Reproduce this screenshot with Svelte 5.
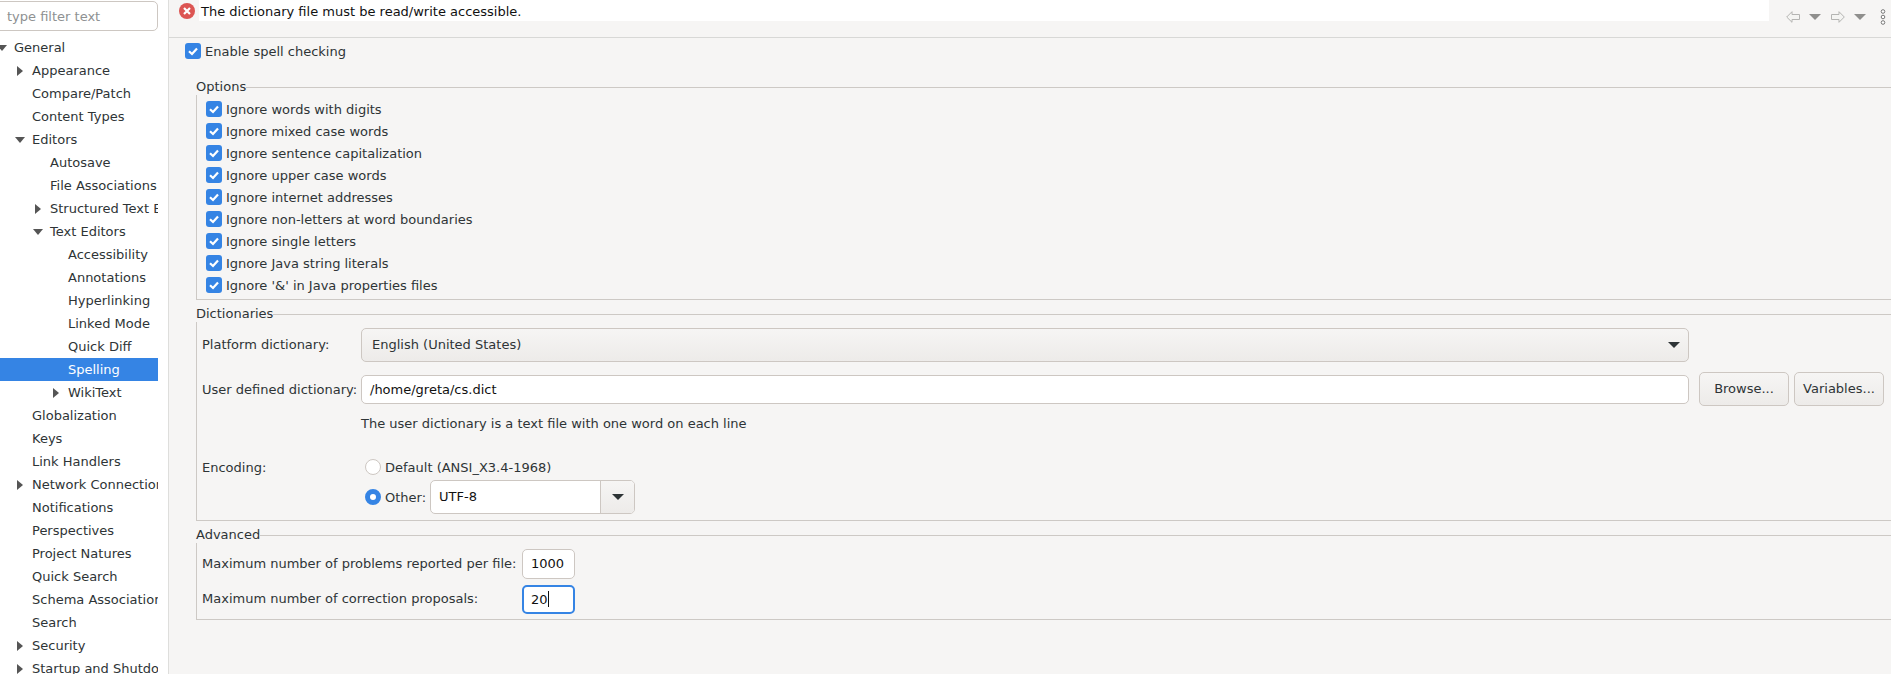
<script>
  const tree = [
    ["General", 0, "open"],
    ["Appearance", 1, "closed"],
    ["Compare/Patch", 1],
    ["Content Types", 1],
    ["Editors", 1, "open"],
    ["Autosave", 2],
    ["File Associations", 2],
    ["Structured Text Editors", 2, "closed"],
    ["Text Editors", 2, "open"],
    ["Accessibility", 3],
    ["Annotations", 3],
    ["Hyperlinking", 3],
    ["Linked Mode", 3],
    ["Quick Diff", 3],
    ["Spelling", 3, null, true],
    ["WikiText", 3, "closed"],
    ["Globalization", 1],
    ["Keys", 1],
    ["Link Handlers", 1],
    ["Network Connections", 1, "closed"],
    ["Notifications", 1],
    ["Perspectives", 1],
    ["Project Natures", 1],
    ["Quick Search", 1],
    ["Schema Associations", 1],
    ["Search", 1],
    ["Security", 1, "closed"],
    ["Startup and Shutdown", 1, "closed"]
  ];

  const options = [
    "Ignore words with digits",
    "Ignore mixed case words",
    "Ignore sentence capitalization",
    "Ignore upper case words",
    "Ignore internet addresses",
    "Ignore non-letters at word boundaries",
    "Ignore single letters",
    "Ignore Java string literals",
    "Ignore '&' in Java properties files"
  ];
</script>

{#snippet checkbox(text)}
  <div class="check">
    <span class="box">
      <svg width="16" height="16" viewBox="0 0 16 16">
        <path d="M4 8.2 L7 11 L12 5.4" fill="none" stroke="#fff" stroke-width="2.2" />
      </svg>
    </span>
    <span>{text}</span>
  </div>
{/snippet}

{#snippet dropArrow()}
  <svg class="drop" width="12" height="6" viewBox="0 0 12 6"><path d="M0 0 H12 L6 6 Z" fill="#8f8f8d" /></svg>
{/snippet}

<div class="window">
  <aside class="sidebar">
    <div class="filter">type filter text</div>
    <ul class="tree">
      {#each tree as [name, level, arrow, selected]}
        <li class="row" class:selected>
          <span class="twisty" style:margin-left="{level * 18 - 4}px">
            {#if arrow === "open"}
              <svg width="10" height="6" viewBox="0 0 10 6"><path d="M0 0 H10 L5 6 Z" fill="#555" /></svg>
            {:else if arrow === "closed"}
              <svg width="6" height="10" viewBox="0 0 6 10"><path d="M0 0 L6 5 L0 10 Z" fill="#555" /></svg>
            {/if}
          </span>
          <span class="name">{name}</span>
        </li>
      {/each}
    </ul>
  </aside>

  <main class="main">
    <header class="header">
      <svg class="error" width="16" height="16" viewBox="0 0 16 16">
        <circle cx="8" cy="8" r="8" fill="#dc5552" />
        <path d="M5 5 L11 11 M11 5 L5 11" stroke="#fff" stroke-width="2.2" />
      </svg>
      <div class="message">The dictionary file must be read/write accessible.</div>
      <div class="toolbar">
        <svg width="14" height="12" viewBox="0 0 14 12">
          <path d="M.7 6 L6 .7 V3.5 H13.5 V8.5 H6 V11.3 Z" fill="#f4f4f2" stroke="#b4b4b2" />
        </svg>
        {@render dropArrow()}
        <svg class="fwd" width="14" height="12" viewBox="0 0 14 12">
          <path d="M13.3 6 L8 .7 V3.5 H.5 V8.5 H8 V11.3 Z" fill="#f4f4f2" stroke="#b4b4b2" />
        </svg>
        {@render dropArrow()}
        <svg class="dots" width="6" height="16" viewBox="0 0 6 16">
          <circle cx="3" cy="2.5" r="1.8" fill="#fff" stroke="#777" />
          <circle cx="3" cy="8" r="1.8" fill="#fff" stroke="#777" />
          <circle cx="3" cy="13.5" r="1.8" fill="#fff" stroke="#777" />
        </svg>
      </div>
    </header>

    <div class="content">
      <div class="enable">{@render checkbox("Enable spell checking")}</div>

      <fieldset>
        <legend>Options</legend>
        <div class="options">
          {#each options as option}
            {@render checkbox(option)}
          {/each}
        </div>
      </fieldset>

      <fieldset>
        <legend>Dictionaries</legend>
        <div class="dict">
          <div class="line">
            <span class="label raised">Platform dictionary:</span>
            <div class="combo">
              <span class="raised">English (United States)</span>
              <svg width="12" height="6" viewBox="0 0 12 6"><path d="M0 0 H12 L6 6 Z" fill="#2e3436" /></svg>
            </div>
            <div class="spacer"></div>
          </div>
          <div class="line second">
            <span class="label">User defined dictionary:</span>
            <div class="input grow">/home/greta/cs.dict</div>
            <button class="first">Browse...</button>
            <button>Variables...</button>
          </div>
          <p class="hint">The user dictionary is a text file with one word on each line</p>
          <div class="line encoding">
            <span class="label">Encoding:</span>
            <div class="radios">
              <div class="radio">
                <span class="dot"></span>
                <span class="lowered">Default (ANSI_X3.4-1968)</span>
              </div>
              <div class="radio other">
                <span class="dot on"></span>
                <span>Other:</span>
                <div class="select">
                  <span class="value">UTF-8</span>
                  <span class="arrow">
                    <svg width="12" height="6" viewBox="0 0 12 6"><path d="M0 0 H12 L6 6 Z" fill="#2e3436" /></svg>
                  </span>
                </div>
              </div>
            </div>
          </div>
        </div>
      </fieldset>

      <fieldset>
        <legend>Advanced</legend>
        <div class="advanced">
          <div class="line">
            <span class="label wide raised">Maximum number of problems reported per file:</span>
            <div class="input small">1000</div>
          </div>
          <div class="line">
            <span class="label wide raised">Maximum number of correction proposals:</span>
            <div class="input small focus">20<span class="caret"></span></div>
          </div>
        </div>
      </fieldset>
    </div>
  </main>
</div>

<style>
  :global(body) {
    margin: 0;
    overflow: hidden;
  }

  .window {
    display: flex;
    height: 674px;
    overflow: hidden;
    font-family: "DejaVu Sans", sans-serif;
    font-size: 13px;
    color: #2e3436;
    background: #f6f5f4;
  }

  .sidebar {
    flex: none;
    width: 158px;
    padding-right: 10px;
    background: #fff;
    border-right: 1px solid #dededc;
    overflow: hidden;
  }

  .filter {
    box-sizing: border-box;
    height: 30px;
    margin: 1px 0 5px -6px;
    padding-left: 12px;
    line-height: 29px;
    color: #8e9192;
    border: 1px solid #cdc7c2;
    border-radius: 5px;
  }

  .tree {
    list-style: none;
    margin: 0;
    padding: 0;
  }

  .row {
    display: flex;
    align-items: center;
    height: 23px;
    white-space: nowrap;
    overflow: hidden;
  }

  .row.selected {
    background: #3584e4;
    color: #fff;
  }

  .twisty {
    flex: none;
    box-sizing: border-box;
    display: flex;
    align-items: center;
    justify-content: center;
    width: 18px;
    height: 23px;
    padding-right: 6px;
  }

  .main {
    flex: 1;
    min-width: 0;
  }

  .header {
    display: flex;
    align-items: flex-start;
    height: 37px;
    padding-left: 10px;
    border-bottom: 1px solid #d8d8d6;
  }

  .error {
    flex: none;
    margin: 3px 4px 0 0;
  }

  .message {
    flex: 1;
    box-sizing: border-box;
    height: 21px;
    padding: 1px 0 0 2px;
    line-height: 21px;
    background: #fff;
    color: #111;
  }

  .toolbar {
    flex: none;
    box-sizing: border-box;
    width: 122px;
    height: 11px;
    margin-top: 11px;
    padding-left: 17px;
    display: flex;
    align-items: center;
  }

  .drop {
    margin-left: 9px;
  }

  .fwd {
    margin-left: 10px;
  }

  .dots {
    margin-left: 14px;
  }

  .content {
    padding-left: 27px;
  }

  .enable {
    height: 26px;
    margin-left: -11px;
    display: flex;
    align-items: center;
  }

  .check {
    display: flex;
    align-items: center;
    gap: 4px;
    height: 22px;
  }

  .box {
    flex: none;
    width: 16px;
    height: 16px;
    border-radius: 3px;
    background: #3584e4;
  }

  .box svg {
    display: block;
  }

  fieldset {
    margin: 0 0 6px;
    padding: 0;
    border: 1px solid #cdc9c5;
    border-right: 0;
    min-width: 0;
  }

  legend {
    padding: 0;
    margin-left: -1px;
    height: 16px;
    line-height: 16px;
  }

  .options {
    padding: 0 0 3px 9px;
    margin-top: 3px;
  }

  .enable + fieldset {
    margin-top: 15px;
  }

  .dict {
    padding: 6px 7px 5px 5px;
  }

  .line {
    display: flex;
    align-items: center;
  }

  .label {
    flex: none;
    width: 159px;
    white-space: nowrap;
  }

  .raised {
    margin-bottom: 2px;
  }

  .lowered {
    margin-top: 2px;
  }

  .combo {
    flex: 1;
    height: 34px;
    box-sizing: border-box;
    padding: 0 8px 0 10px;
    display: flex;
    align-items: center;
    justify-content: space-between;
    border: 1px solid #cdc7c2;
    border-radius: 5px;
    background: linear-gradient(#f6f5f4, #edebe9);
  }

  .spacer {
    flex: none;
    width: 195px;
  }

  .second {
    margin-top: 10px;
  }

  .input {
    box-sizing: border-box;
    height: 29px;
    line-height: 27px;
    padding-left: 8px;
    border: 1px solid #cdc7c2;
    border-radius: 5px;
    background: #fff;
    color: #111;
  }

  .grow {
    flex: 1;
  }

  button {
    flex: none;
    width: 90px;
    height: 34px;
    margin: 0 0 0 5px;
    padding: 0 0 2px;
    font: inherit;
    color: inherit;
    border: 1px solid #cdc7c2;
    border-radius: 5px;
    background: linear-gradient(#f6f5f4, #edebe9);
  }

  button.first {
    margin-left: 10px;
  }

  .hint {
    margin: 10px 0 0 159px;
    height: 16px;
    line-height: 16px;
  }

  .encoding {
    align-items: flex-start;
    margin-top: 20px;
  }

  .encoding .label {
    line-height: 32px;
  }

  .radios {
    padding-left: 4px;
  }

  .radio {
    display: flex;
    align-items: center;
    gap: 4px;
    min-height: 29px;
  }

  .other {
    margin-top: -1px;
    margin-bottom: 1px;
  }

  .dot {
    flex: none;
    box-sizing: border-box;
    width: 16px;
    height: 16px;
    border-radius: 50%;
    border: 1px solid #cdc7c2;
    background: #fff;
  }

  .dot.on {
    border: 5px solid #3584e4;
  }

  .select {
    display: flex;
    width: 205px;
    height: 34px;
    box-sizing: border-box;
    border: 1px solid #cdc7c2;
    border-radius: 5px;
    background: #fff;
    overflow: hidden;
    color: #111;
  }

  .value {
    flex: 1;
    padding-left: 8px;
    line-height: 32px;
  }

  .arrow {
    flex: none;
    width: 33px;
    display: flex;
    align-items: center;
    justify-content: center;
    border-left: 1px solid #cdc7c2;
    background: linear-gradient(#f6f5f4, #edebe9);
  }

  .advanced {
    padding: 6px 0 5px 5px;
    display: flex;
    flex-direction: column;
    gap: 6px;
  }

  .wide {
    width: 320px;
  }

  .small {
    width: 53px;
    height: 30px;
    line-height: 28px;
  }

  .small.focus {
    height: 29px;
    border: 2px solid #3584e4;
    line-height: 25px;
    padding-left: 7px;
  }

  .caret {
    display: inline-block;
    width: 1px;
    height: 16px;
    background: #111;
    vertical-align: -3px;
  }
</style>
